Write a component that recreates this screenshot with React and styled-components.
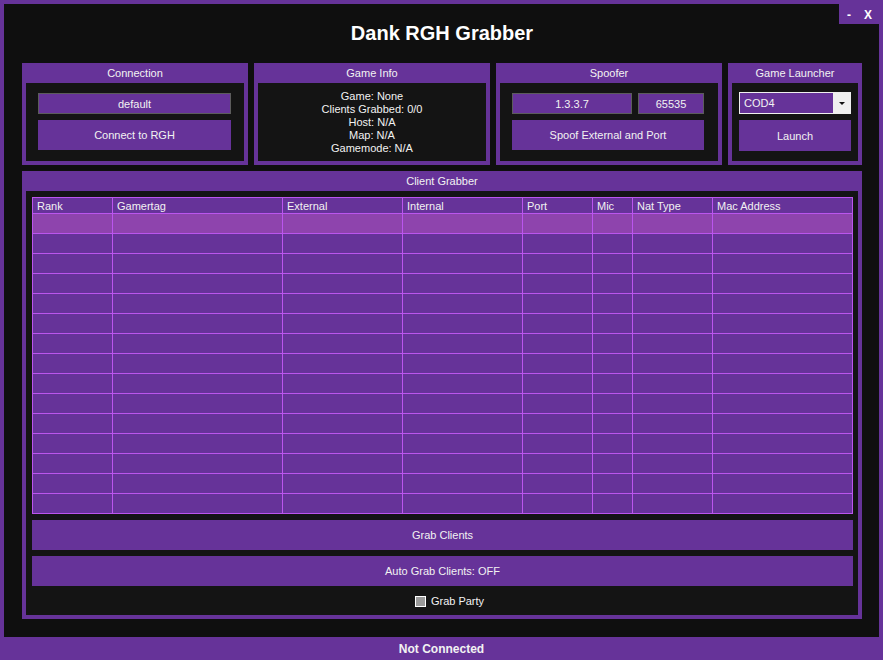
import React from "react"
import styled, { createGlobalStyle } from "styled-components"

const GlobalStyle = createGlobalStyle`
  html, body {
    margin: 0;
    padding: 0;
    background: #663399;
  }
  * {
    box-sizing: border-box;
  }
`

const Window = styled.div`
  position: relative;
  width: 883px;
  height: 660px;
  background: #663399;
  padding: 4px 4px 0 4px;
  display: flex;
  flex-direction: column;
  font-family: "Liberation Sans", Arial, sans-serif;
  font-size: 11px;
  color: #f2f2f2;
`

const WindowControls = styled.div`
  position: absolute;
  top: 0;
  right: 0;
  width: 44px;
  height: 24px;
  background: #663399;
  display: flex;
  align-items: center;
  justify-content: space-between;
  padding: 6px 11px 0 8px;
  font-weight: bold;
  font-size: 12px;
  color: #fff;
`

const Main = styled.div`
  flex: 1;
  background: #0f0f0f;
  padding: 0 17px 18px 18px;
  display: flex;
  flex-direction: column;
`

const Title = styled.h1`
  margin: 0;
  height: 59px;
  display: flex;
  align-items: center;
  justify-content: center;
  font-size: 20px;
  font-weight: bold;
  color: #fff;
  font-family: "Liberation Sans", Arial, sans-serif;
`

const TopRow = styled.div`
  display: flex;
  gap: 6px;
  height: 102px;
`

const Group = styled.div`
  width: ${(p) => p.$width}px;
  flex: ${(p) => (p.$width ? "none" : "1")};
  background: #663399;
  padding: 0 4px 4px 4px;
  display: flex;
  flex-direction: column;
`

const GroupHeader = styled.div`
  height: 20px;
  line-height: 21px;
  text-align: center;
  flex: none;
`

const GroupBody = styled.div`
  flex: 1;
  background: #141414;
  padding: ${(p) => p.$pad || "10px 12px"};
  display: flex;
  flex-direction: column;
  gap: 6px;
`

const Field = styled.div`
  flex: ${(p) => (p.$grow ? "1" : "none")};
  width: ${(p) => (p.$width ? p.$width + "px" : "auto")};
  height: 21px;
  background: #663399;
  border: 1px solid #5c5c5c;
  display: flex;
  align-items: center;
  justify-content: center;
`

const FieldRow = styled.div`
  display: flex;
  gap: 6px;
`

const Button = styled.button`
  height: ${(p) => p.$h || 30}px;
  flex: none;
  border: none;
  background: #663399;
  color: #f2f2f2;
  font-family: "Liberation Sans", Arial, sans-serif;
  font-size: 11px;
  padding: 0;
  cursor: pointer;
`

const InfoLines = styled.div`
  text-align: center;
  line-height: 13px;
`

const Select = styled.div`
  height: 22px;
  border: 1px solid #f0f0f0;
  background: #663399;
  display: flex;
`

const SelectValue = styled.div`
  flex: 1;
  padding-left: 4px;
  display: flex;
  align-items: center;
`

const SelectArrow = styled.div`
  width: 17px;
  background: #f0f0f0;
  display: flex;
  align-items: center;
  justify-content: center;

  &::after {
    content: "";
    border-left: 3px solid transparent;
    border-right: 3px solid transparent;
    border-top: 3px solid #111;
    margin-top: 1px;
  }
`

const GrabberGroup = styled(Group)`
  margin-top: 6px;
  flex: 1;
`

const Table = styled.table`
  width: 820px;
  border-collapse: collapse;
  table-layout: fixed;
  border: 1px solid #bb55ee;
  flex: none;
`

const HeadCell = styled.th`
  height: 16px;
  padding: 0 0 0 4px;
  text-align: left;
  font-weight: normal;
  background: #663399;
  border: 1px solid #bb55ee;
  line-height: 14px;
`

const Cell = styled.td`
  height: 20px;
  padding: 0;
  background: ${(p) => (p.$active ? "#8e44ad" : "#663399")};
  border: 1px solid #bb55ee;
`

const CheckRow = styled.label`
  display: flex;
  align-items: center;
  justify-content: center;
  gap: 5px;
  margin-top: 3px;
  padding-left: 14px;
`

const CheckBox = styled.span`
  width: 11px;
  height: 11px;
  background: #999;
  border: 1px solid #fff;
`

const StatusBar = styled.div`
  height: 23px;
  flex: none;
  display: flex;
  align-items: center;
  justify-content: center;
  font-weight: bold;
  font-size: 12px;
  color: #f2f2f2;
`

const columns = [
  { name: "Rank", width: 80 },
  { name: "Gamertag", width: 170 },
  { name: "External", width: 120 },
  { name: "Internal", width: 120 },
  { name: "Port", width: 70 },
  { name: "Mic", width: 40 },
  { name: "Nat Type", width: 80 },
  { name: "Mac Address", width: 140 },
]

const rows = Array.from({ length: 15 }, (_, i) => i)

const App = () => {
  return (
    <>
      <GlobalStyle />
      <Window>
        <WindowControls>
          <span>-</span>
          <span>X</span>
        </WindowControls>
        <Main>
          <Title>Dank RGH Grabber</Title>
          <TopRow>
            <Group $width={226}>
              <GroupHeader>Connection</GroupHeader>
              <GroupBody $pad="10px 13px 0 12px">
                <Field>default</Field>
                <Button>Connect to RGH</Button>
              </GroupBody>
            </Group>
            <Group $width={236}>
              <GroupHeader>Game Info</GroupHeader>
              <GroupBody $pad="7px 0 0 0">
                <InfoLines>
                  <div>Game: None</div>
                  <div>Clients Grabbed: 0/0</div>
                  <div>Host: N/A</div>
                  <div>Map: N/A</div>
                  <div>Gamemode: N/A</div>
                </InfoLines>
              </GroupBody>
            </Group>
            <Group $width={226}>
              <GroupHeader>Spoofer</GroupHeader>
              <GroupBody $pad="10px 14px 0 12px">
                <FieldRow>
                  <Field $grow>1.3.3.7</Field>
                  <Field $width={66}>65535</Field>
                </FieldRow>
                <Button>Spoof External and Port</Button>
              </GroupBody>
            </Group>
            <Group $width={134}>
              <GroupHeader>Game Launcher</GroupHeader>
              <GroupBody $pad="9px 7px 0 7px">
                <Select>
                  <SelectValue>COD4</SelectValue>
                  <SelectArrow />
                </Select>
                <Button $h={31}>Launch</Button>
              </GroupBody>
            </Group>
          </TopRow>
          <GrabberGroup>
            <GroupHeader>Client Grabber</GroupHeader>
            <GroupBody $pad="6px 5px 0 6px">
              <Table>
                <colgroup>
                  {columns.map((c) => (
                    <col key={c.name} style={{ width: c.width }} />
                  ))}
                </colgroup>
                <thead>
                  <tr>
                    {columns.map((c) => (
                      <HeadCell key={c.name}>{c.name}</HeadCell>
                    ))}
                  </tr>
                </thead>
                <tbody>
                  {rows.map((r) => (
                    <tr key={r}>
                      {columns.map((c) => (
                        <Cell key={c.name} $active={r === 0} />
                      ))}
                    </tr>
                  ))}
                </tbody>
              </Table>
              <Button>Grab Clients</Button>
              <Button>Auto Grab Clients: OFF</Button>
              <CheckRow>
                <CheckBox />
                Grab Party
              </CheckRow>
            </GroupBody>
          </GrabberGroup>
        </Main>
        <StatusBar>Not Connected</StatusBar>
      </Window>
    </>
  )
}

export default App
